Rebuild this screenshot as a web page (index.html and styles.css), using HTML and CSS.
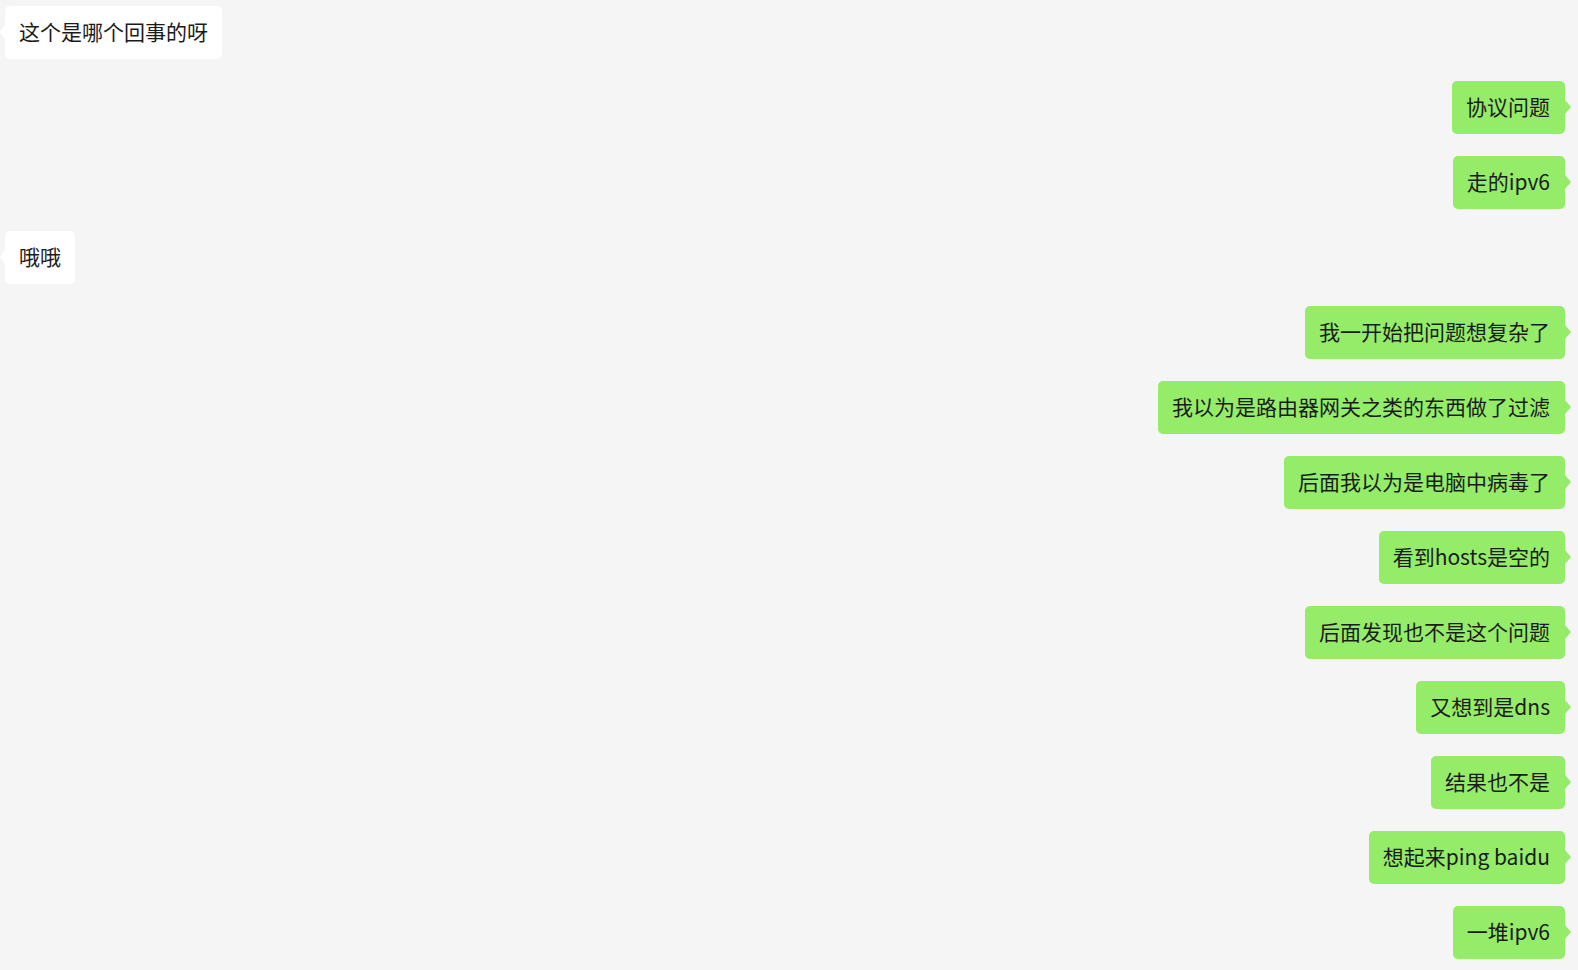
FILE: index.html
```html
<!DOCTYPE html>
<html lang="zh-CN">
<head>
    <meta charset="UTF-8">
    <meta name="viewport" content="width=device-width, initial-scale=1.0">
    <title>聊天记录</title>
    <link rel="stylesheet" href="styles.css">
</head>
<body>
    <div class="chat">
        <div class="msg left"><div class="bubble">这个是哪个回事的呀</div></div>
        <div class="msg right"><div class="bubble">协议问题</div></div>
        <div class="msg right"><div class="bubble">走的ipv6</div></div>
        <div class="msg left"><div class="bubble">哦哦</div></div>
        <div class="msg right"><div class="bubble">我一开始把问题想复杂了</div></div>
        <div class="msg right"><div class="bubble">我以为是路由器网关之类的东西做了过滤</div></div>
        <div class="msg right"><div class="bubble">后面我以为是电脑中病毒了</div></div>
        <div class="msg right"><div class="bubble">看到hosts是空的</div></div>
        <div class="msg right"><div class="bubble">后面发现也不是这个问题</div></div>
        <div class="msg right"><div class="bubble">又想到是dns</div></div>
        <div class="msg right"><div class="bubble">结果也不是</div></div>
        <div class="msg right"><div class="bubble">想起来ping baidu</div></div>
        <div class="msg right"><div class="bubble">一堆ipv6</div></div>
    </div>
</body>
</html>
```

FILE: styles.css
```css
body {
    margin: 0;
    background-color: #f5f5f5;
    font-family: "Noto Sans CJK SC", "Noto Sans", sans-serif;
    color: #1b1b1b;
}
.chat {
    display: flex;
    flex-direction: column;
    gap: 22px;
    padding: 6px 13px 0 5px;
}
.msg {
    display: flex;
}
.msg.left {
    justify-content: flex-start;
}
.msg.right {
    justify-content: flex-end;
}
.bubble {
    position: relative;
    font-size: 21px;
    line-height: 29px;
    padding: 11px 14px 13px 14px;
    border-radius: 5px;
    white-space: nowrap;
}
.left .bubble {
    background: #ffffff;
}
.right .bubble {
    background: #95ec69;
    padding: 11px 15px 13px 14px;
}
.bubble::after {
    content: "";
    position: absolute;
    top: 19px;
    border-top: 7px solid transparent;
    border-bottom: 7px solid transparent;
}
.left .bubble::after {
    left: -5px;
    border-right: 5px solid #ffffff;
}
.right .bubble::after {
    right: -6px;
    border-left: 6px solid #95ec69;
}
```
